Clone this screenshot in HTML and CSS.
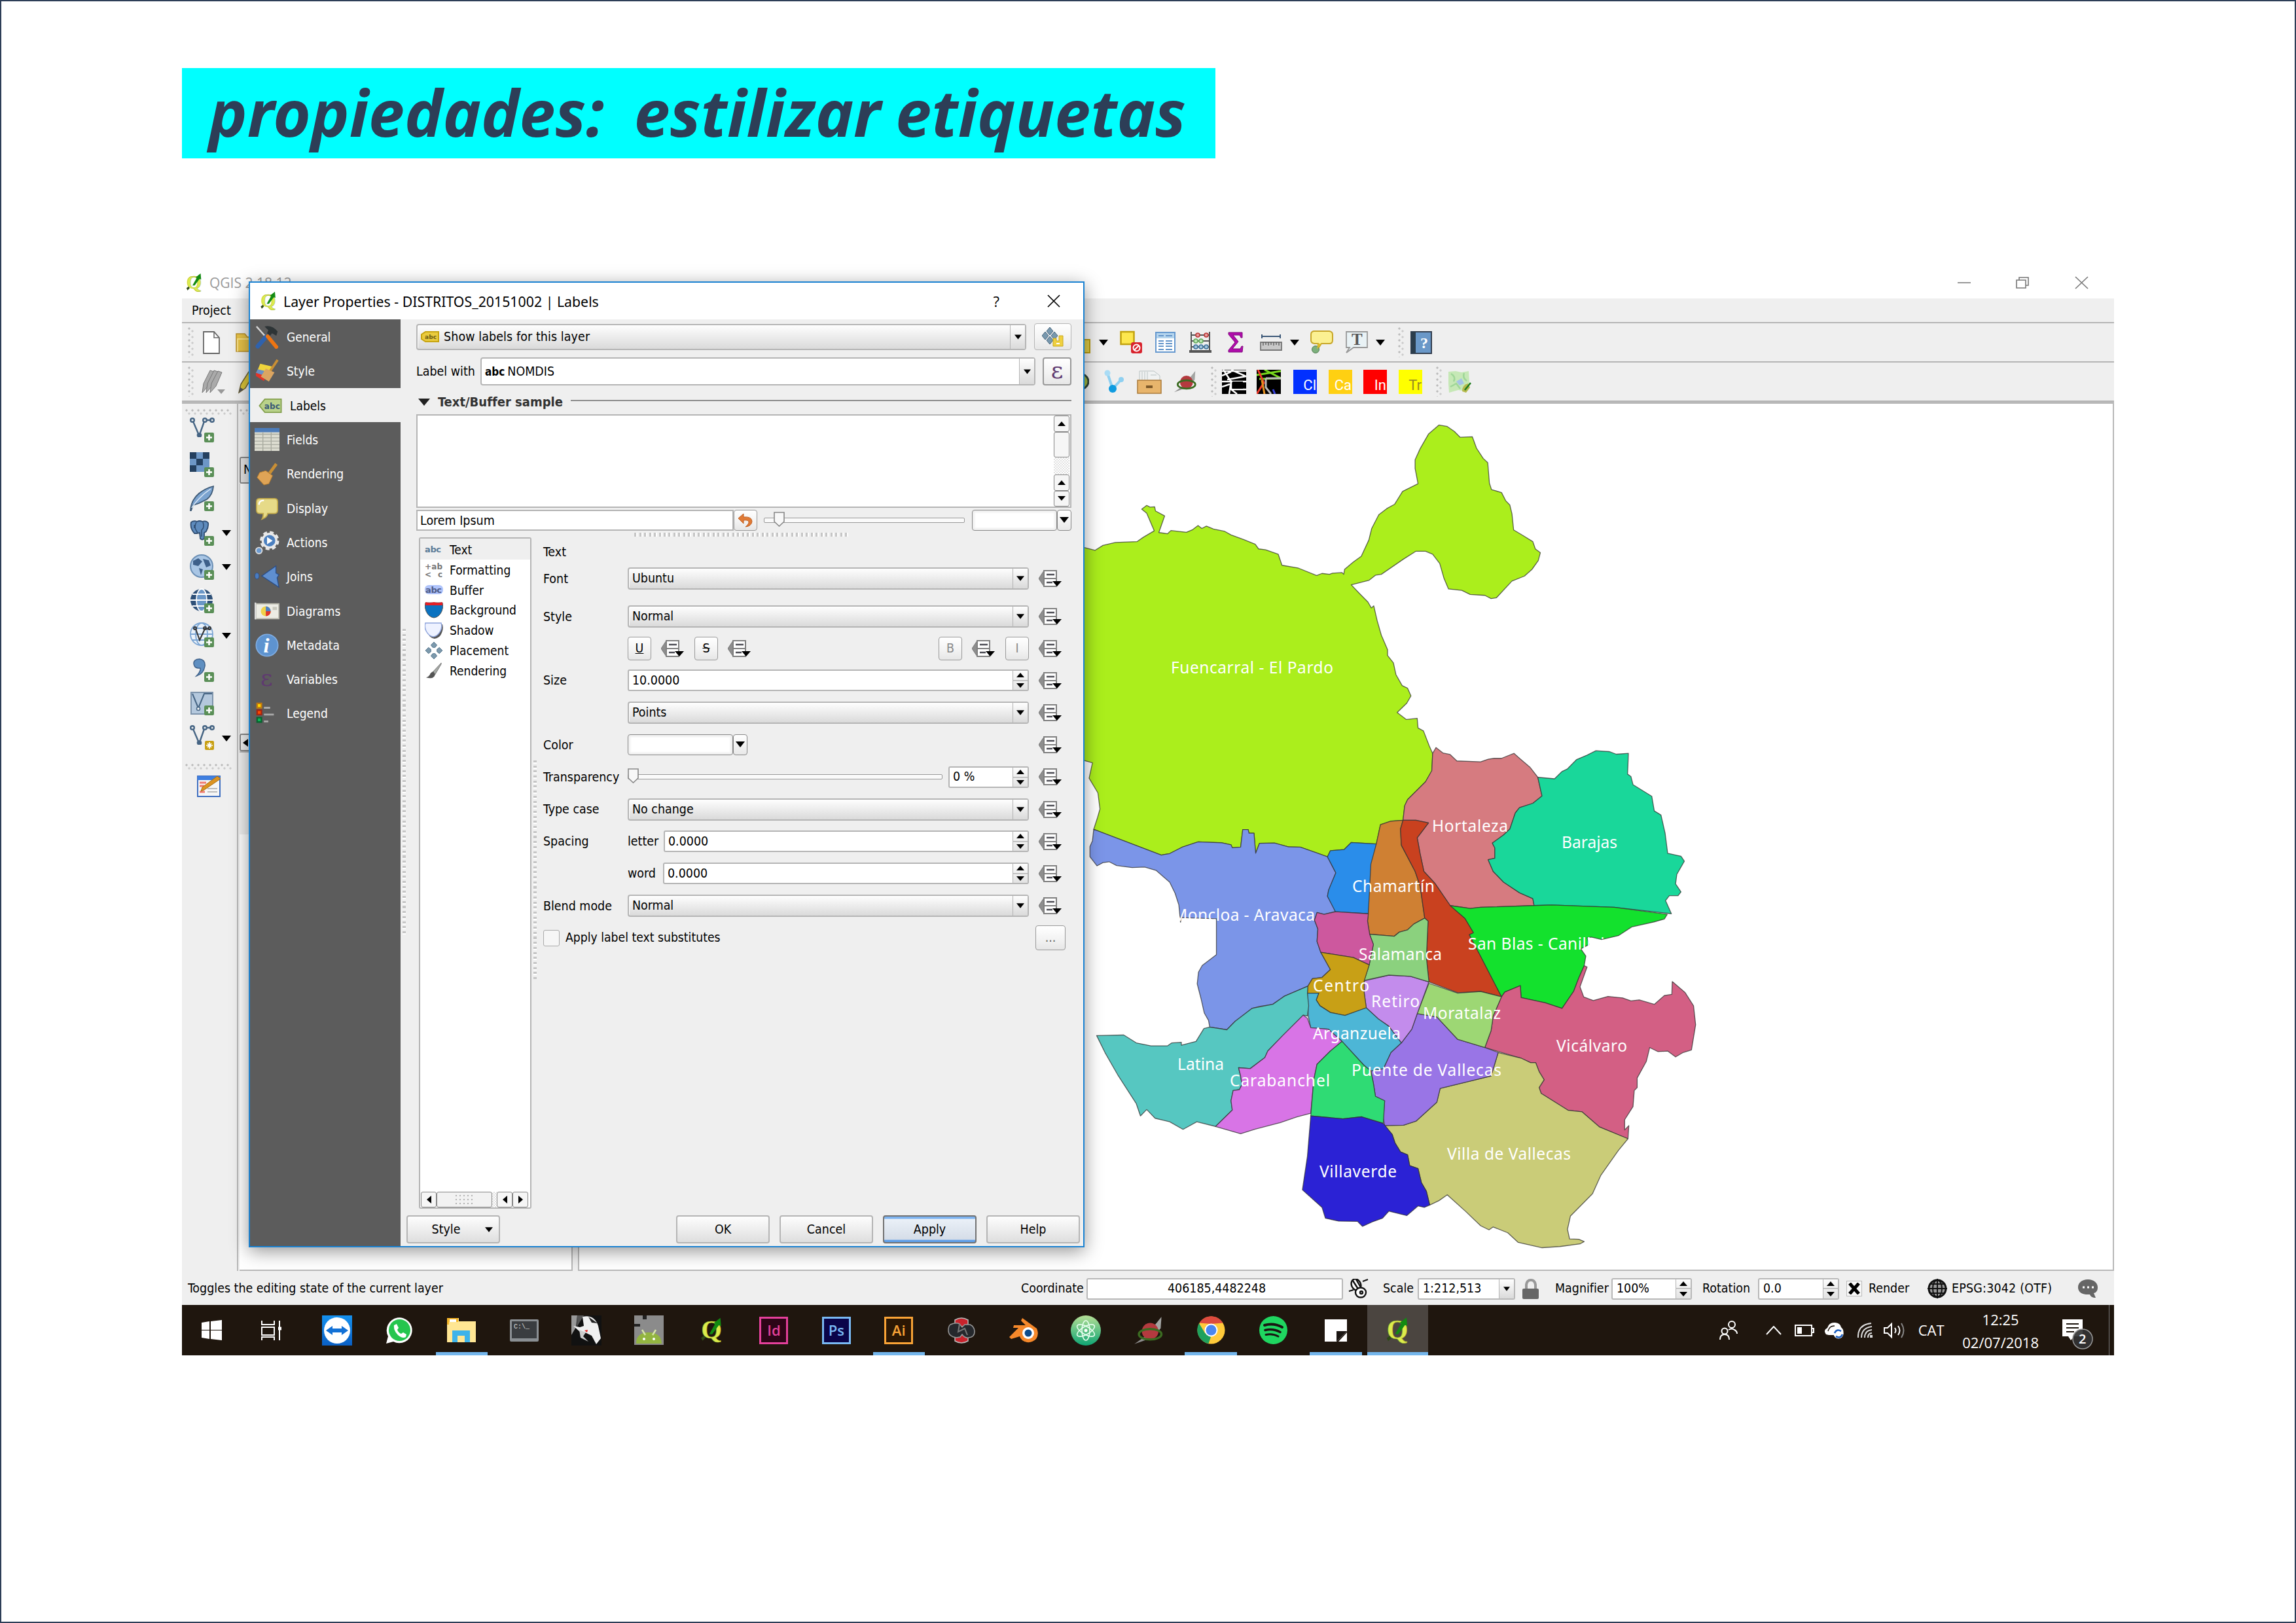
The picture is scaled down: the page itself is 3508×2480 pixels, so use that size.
FILE: index.html
```html
<!DOCTYPE html>
<html lang="es">
<head>
<meta charset="utf-8">
<title>propiedades: estilizar etiquetas</title>
<link rel="stylesheet" href="styles.css">
</head>
<body>
<svg class="defs" width="0" height="0">
  <defs>
    <linearGradient id="gAtom" x1="0" y1="0" x2="0" y2="1"><stop offset="0" stop-color="#b5df96"/><stop offset="1" stop-color="#0fa573"/></linearGradient>
    <linearGradient id="gTv" x1="0" y1="0" x2="0" y2="1"><stop offset="0" stop-color="#1591ee"/><stop offset="1" stop-color="#0a5fc4"/></linearGradient>
    <symbol id="qgis" viewBox="0 0 30 36"><text x="1" y="29" font-family="Liberation Serif" font-weight="bold" font-size="36" fill="#dcec4c" stroke="#9aa82a" stroke-width=".5">Q</text><path d="M12 23 20 9l-2-1 9-7 1 11-3-1-9 12z" fill="#128a12"/><path d="M1 28l4-3 2 3-4 4z" fill="#2e4a16"/></symbol>
    <symbol id="dd" viewBox="0 0 36 34"><path d="M8 5v24L0 17z" fill="#8e8e8e" stroke="#777"/><path d="M8 5h19v24H8z" fill="#fff" stroke="#808080" stroke-width="2"/><path d="M8 17h19" stroke="#808080" stroke-width="2"/><path d="M12 11h12M12 23h9" stroke="#4d4d55" stroke-width="2.600"/><path d="M21 21h14l-7 8z" fill="#000"/></symbol>
    <symbol id="tri" viewBox="0 0 14 9"><path d="M0 0h14L7 9z" fill="#000"/></symbol>
    <symbol id="plus" viewBox="0 0 16 16"><rect width="15" height="15" rx="2" fill="#5a8f57"/><path d="M7.500 3v9M3 7.500h9" stroke="#fff" stroke-width="2.600"/></symbol>
    <symbol id="vee" viewBox="0 0 38 30"><g fill="none" stroke="#466584" stroke-width="2.400"><path d="M5 6l9 21M15 26l7-20M25 4h8"/><circle cx="4" cy="4" r="2.800"/><circle cx="23" cy="4" r="2.800"/><circle cx="34" cy="4" r="2.800"/><circle cx="14.500" cy="27" r="2.600" fill="#466584"/></g></symbol>
    <symbol id="bird" viewBox="0 0 40 40"><path d="M24 18 37 2l-1 15-8 10z" fill="#a3a5a3"/><path d="M1 38l14-10 3 4z" fill="#8c8c8c"/><ellipse cx="22" cy="21" rx="11" ry="11" fill="#b43a3f"/><ellipse cx="22" cy="25" rx="15" ry="7" fill="none" stroke="#3b6b21" stroke-width="3"/></symbol>
  </defs>
</svg>
<main class="slide">
<h1 class="title"><span>propiedades:&nbsp; estilizar etiquetas</span></h1>

<section class="screen">
  <header class="win-title">
    <svg class="q-icon" width="25" height="30"><use href="#qgis"/></svg>
    <span>QGIS 2.18.12</span>
    <svg class="win-ctl" width="210" height="24" viewBox="0 0 210 24" fill="none" stroke="#777" stroke-width="1.600"><path d="M2 12h20M182 3l19 18M201 3l-19 18"/><path d="M92 8h14v12H92zM96 8V4h14v12h-4"/></svg>
  </header>
  <nav class="menubar"><span>Project</span></nav>

  <div class="toolbar tb-main">
    <i class="grip"></i>
    <svg width="26" height="35" viewBox="0 0 26 35"><path d="M1 1h16l8 9v24H1z" fill="#fff" stroke="#666" stroke-width="1.800"/><path d="M17 1v9h8" fill="none" stroke="#666" stroke-width="1.500"/></svg>
    <svg width="38" height="30" viewBox="0 0 38 30"><path d="M1 29V2h13l4 5h19v22z" fill="#e7c247" stroke="#b8902a" stroke-width="1.500"/><path d="M3 29V10h33" fill="none" stroke="#f7e08a" stroke-width="2"/></svg>
    <svg class="low" width="17" height="22" viewBox="0 0 17 22"><path d="M1 1h15v20H1z" fill="#dfcb45" stroke="#b89c10" stroke-width="2"/></svg>
    <svg width="14" height="9"><use href="#tri"/></svg>
    <svg width="35" height="36" viewBox="0 0 35 36"><path d="M1.500 2h20v19h-20z" fill="#fde74f" stroke="#c2a20c" stroke-width="2.500"/><rect x="17" y="18" width="17" height="17" rx="3" fill="#d8232d"/><circle cx="25.500" cy="26.500" r="5" fill="none" stroke="#fff" stroke-width="2"/><path d="M22 30l7-7" stroke="#fff" stroke-width="2"/></svg>
    <svg width="31" height="32" viewBox="0 0 31 32"><path d="M1 1h29v30H1z" fill="#fff" stroke="#6699cf" stroke-width="2"/><path d="M2 2h27v8H2z" fill="#b5d5ee"/><path d="M5 6h8M16 6h10M5 14h8M16 14h10M5 18h8M16 18h10M5 22h8M16 22h10M5 27h8M16 27h10" stroke="#6394c9" stroke-width="2"/></svg>
    <svg width="34" height="34" viewBox="0 0 34 34"><path d="M3 1v29M31 1v29M3 6h28M3 15h28M3 24h28" stroke="#555" stroke-width="2" fill="none"/><path d="M0 31h34" stroke="#555" stroke-width="4"/><g stroke-width="1.500"><g fill="#e69a9a" stroke="#b93434"><circle cx="13" cy="6" r="3"/><circle cx="26" cy="6" r="3"/></g><g fill="#b7e3b0" stroke="#62aa5c"><circle cx="10" cy="15" r="3"/><circle cx="18" cy="15" r="3"/></g><g fill="#9fc3dd" stroke="#3d7199"><circle cx="10" cy="24" r="3"/><circle cx="18" cy="24" r="3"/><circle cx="26" cy="24" r="3"/></g></g></svg>
    <svg width="24" height="32" viewBox="0 0 24 32"><path d="M1 1h21v8h-2l-2-4H8l8 10-9 11h12l2-4h2l-1 9H1v-3l10-12L1 4z" fill="#b00cab" stroke="#7f0a7c"/></svg>
    <svg width="34" height="26" viewBox="0 0 34 26"><path d="M3 4h28M3 1v6M31 1v6" stroke="#3c5878" stroke-width="2"/><path d="M1 13h32v12H1z" fill="#c8c8c8" stroke="#777" stroke-width="1.800"/><path d="M5 13v5M9 13v4M13 13v5M17 13v4M21 13v5M25 13v4M29 13v5" stroke="#666" stroke-width="1.500"/></svg>
    <svg width="14" height="9"><use href="#tri"/></svg>
    <svg width="35" height="36" viewBox="0 0 35 36"><path d="M5 1h24q5 1 5 5v9q0 5-5 5H17l-6 9 1-9H6q-5-1-5-5V6q0-4 4-5z" fill="#fbf092" stroke="#c8a72b" stroke-width="2"/><circle cx="8" cy="29" r="5.500" fill="#7cb07c" stroke="#567f56"/><path d="M17 20l-7 9 2-9z" fill="#dfbd25"/></svg>
    <svg width="34" height="36" viewBox="0 0 34 36"><path d="M1 2h32v24H12L1 34l5-8H1z" fill="#e9f2f5" stroke="#999" stroke-width="1.800"/><text x="9" y="22" font-family="Liberation Serif" font-weight="bold" font-size="25" fill="#555">T</text></svg>
    <svg width="14" height="9"><use href="#tri"/></svg>
    <i class="grip"></i>
    <svg width="33" height="35" viewBox="0 0 33 35"><path d="M1 1h31v33H1z" fill="#6a98c8" stroke="#333f50" stroke-width="2"/><path d="M1 1h7v33H1z" fill="#2b3d4c"/><text x="15" y="26" font-family="Liberation Serif" font-weight="bold" font-size="24" fill="#fff">?</text></svg>
  </div>

  <div class="toolbar tb-edit">
    <i class="grip"></i>
    <svg width="38" height="38" viewBox="0 0 38 38"><g fill="#aaa" stroke="#777"><path d="M2 36l2-14L14 2l6 2-9 22z"/><path d="M8 36l2-14L20 2l6 2-9 22z"/><path d="M14 36l2-14L26 3l6 2-9 21z"/></g><path d="M25 31h12l-6 7z" fill="#999"/></svg>
    <svg width="30" height="38" viewBox="0 0 30 38"><path d="M1 36l3-13L18 1l7 4-14 24z" fill="#dcc63a" stroke="#6d6230" stroke-width="1.500"/><path d="M1 36l2-8 5 3z" fill="#555"/></svg>
    <svg width="34" height="28" viewBox="0 0 34 28"><ellipse cx="17" cy="14" rx="16" ry="13" fill="#9fb73d" stroke="#2e4238" stroke-width="3"/></svg>
    <svg width="32" height="40" viewBox="0 0 32 40"><path d="M5 7l8 24M14 30L27 16" stroke="#8fd0f1" stroke-width="4"/><circle cx="5" cy="7" r="4.500" fill="#aadcf5"/><circle cx="26" cy="17" r="4" fill="#8fd0f1"/><circle cx="13" cy="31" r="6" fill="#0e9be0"/></svg>
    <svg width="38" height="37" viewBox="0 0 38 37"><path d="M4 2h22l9 7v8H4z" fill="#f0f2f2" stroke="#b9c2c2"/><path d="M8 3v12M12 3v12M16 3v12M21 8h9" stroke="#b9c2c2"/><path d="M1 16h36v20H1z" fill="#e8b56c" stroke="#aa7b3a" stroke-width="1.500"/><path d="M14 26h10" stroke="#7c5829" stroke-width="4"/></svg>
    <svg width="40" height="36"><use href="#bird"/></svg>
    <i class="grip"></i>
    <svg width="37" height="37" viewBox="0 0 37 37"><path d="M0 0h37v37H0z"/><g stroke="#fff" stroke-width="2.500" fill="none"><path d="M0 2h37M2 0l12 18L11 37M14 0l23 10L8 15M0 18h37M14 16v14l9 7M0 9l14-6M0 26l12-4M14 30h23"/></g><path d="M16 18h16v11H16z"/></svg>
    <svg width="37" height="37" viewBox="0 0 37 37"><path d="M0 0h37v37H0z"/><g stroke-width="3" fill="none"><path d="M0 8l37-6M12 0l25 13L4 14" stroke="#77d91d"/><path d="M2 0l9 20L0 37" stroke="#f03b2d"/><path d="M8 16l4 21" stroke="#e58f1e"/><path d="M14 13v14l8 10M14 13h23" stroke="#bbb"/><path d="M25 30l3 7" stroke="#3540dd"/></g></svg>
    <b class="plug cl">Cl</b><b class="plug ca">Ca</b><b class="plug in">In</b><b class="plug tr">Tr</b>
    <i class="grip"></i>
    <svg width="38" height="37" viewBox="0 0 38 37"><path d="M2 3l11-1 9 2 11-2 1 18-3 13-14-2-14 4-1-14z" fill="#c6e8b6"/><path d="M6 6q8 5 4 12M5 26l9-5 6 8M26 5q-3 7 4 12" stroke="#9fd698" stroke-width="2.500" fill="none"/><path d="M14 18l8-5 4 8-7 3z" fill="#a6c3e6"/><path d="M23 33q0-10 9-12l3 6-6 8z" fill="#b5b94c"/><path d="M27 31l9-11" stroke="#1d7b1d" stroke-width="2.500"/></svg>
  </div>

  <div class="workspace">
    <aside class="side-tools">
      <i class="grip-h"></i>
      <div class="tool"><svg width="38" height="40" viewBox="0 0 38 40"><use href="#vee" width="38" height="30"/><use href="#plus" x="22" y="23" width="16" height="16"/></svg></div>
      <div class="tool"><svg width="38" height="40" viewBox="0 0 38 40"><path d="M0 1h30v30H0z" fill="#6d97c6"/><path d="M0 1h10v10H0zM20 1h10v10H20zM10 11h10v10H10zM0 21h10v10H0z" fill="#24405f"/><use href="#plus" x="22" y="24" width="16" height="16"/></svg></div>
      <div class="tool"><svg width="38" height="40" viewBox="0 0 38 40"><path d="M1 38Q2 22 14 12 24 4 36 1q-1 13-10 20l-12 6-9 3-3 8z" fill="#7ba3cf" stroke="#3c5874" stroke-width="1.800"/><path d="M3 34Q14 17 32 5" stroke="#d8e6f4" stroke-width="1.500" fill="none"/><use href="#plus" x="22" y="24" width="16" height="16"/></svg></div>
      <div class="tool"><svg width="38" height="40" viewBox="0 0 38 40"><path d="M2 3q4-3 9-1 4-2 8 0 6-2 9 2 1 6-3 13l-3 2v9q-3 3-6 0l-1-9-4 1-4 0Q0 12 2 3z" fill="#5e8bbd" stroke="#2f4d72" stroke-width="1.800"/><path d="M10 3q-4 7 0 13l2 3M20 3q3 8-2 12v10M7 7v5" stroke="#2f4d72" stroke-width="1.500" fill="none"/><use href="#plus" x="22" y="24" width="16" height="16"/></svg><svg class="arr" width="14" height="9"><use href="#tri"/></svg></div>
      <div class="tool"><svg width="38" height="40" viewBox="0 0 38 40"><circle cx="18" cy="18" r="17" fill="#a9c6e5" stroke="#6b8fb5" stroke-width="2"/><path d="M5 10l8-4 6 5-6 7-8-2zM20 7l9 2 3 8-7 3zM14 21l6 2-3 9z" fill="#3e608a"/><use href="#plus" x="22" y="24" width="16" height="16"/></svg><svg class="arr" width="14" height="9"><use href="#tri"/></svg></div>
      <div class="tool"><svg width="38" height="40" viewBox="0 0 38 40"><circle cx="18" cy="18" r="17" fill="#2e5078"/><g fill="none" stroke="#fff" stroke-width="1.800"><ellipse cx="18" cy="18" rx="8" ry="17" fill="#6b97c7"/><path d="M1 18h34M4 9h28M4 27h28"/></g><use href="#plus" x="22" y="23" width="16" height="16"/></svg></div>
      <div class="tool"><svg width="38" height="40" viewBox="0 0 38 40"><g fill="#eaf2fa" stroke="#7ba5d3" stroke-width="1.800"><circle cx="18" cy="18" r="17"/><ellipse cx="18" cy="18" rx="9" ry="17"/><path d="M1 18h34M4 9h28M4 27h28"/></g><g fill="none" stroke="#333" stroke-width="2"><path d="M9 10l6 17 8-17h7"/><circle cx="8" cy="9" r="2"/><circle cx="23" cy="9" r="2"/><circle cx="30" cy="9" r="2"/></g><use href="#plus" x="22" y="23" width="16" height="16"/></svg><svg class="arr" width="14" height="9"><use href="#tri"/></svg></div>
      <div class="tool"><svg width="38" height="40" viewBox="0 0 38 40"><path d="M6 10q0-7 9-7 9 1 8 11-2 12-13 15 7-7 6-12-9 1-10-7z" fill="#5f8fc1" stroke="#3f618a" stroke-width="1.500"/><use href="#plus" x="22" y="23" width="16" height="16"/></svg></div>
      <div class="tool"><svg width="38" height="40" viewBox="0 0 38 40"><path d="M2 2h33v33H2z" fill="#b4c8dd" stroke="#7d93ab" stroke-width="2"/><path d="M4 4l9 22L22 4h12" fill="none" stroke="#466584" stroke-width="2"/><circle cx="13" cy="27" r="2.500" fill="#fff" stroke="#466584" stroke-width="1.500"/><use href="#plus" x="22" y="22" width="16" height="16"/></svg></div>
      <div class="tool"><svg width="38" height="40" viewBox="0 0 38 40"><use href="#vee" width="38" height="30"/><rect x="23" y="24" width="14" height="14" rx="2" fill="#c8a013"/><path d="M30 26v10M25 31h10M27 28l6 6M33 28l-6 6" stroke="#fff" stroke-width="1.700"/></svg><svg class="arr" width="14" height="9"><use href="#tri"/></svg></div>
      <i class="grip-h second"></i>
      <svg class="edit-form" width="37" height="34" viewBox="0 0 37 34"><path d="M1 2h34v31H1z" fill="#f6f6f6" stroke="#3f6fc0" stroke-width="2"/><path d="M1 2h34v6H1z" fill="#3f7fe0"/><path d="M4 12h10M4 17h7M4 26h8" stroke="#f07a70" stroke-width="3"/><path d="M16 21h15M16 26h15" stroke="#bbb" stroke-width="2"/><path d="M8 19L31 2l5 4-25 17-5 2z" fill="#dc9320" stroke="#a86d12"/></svg>
    </aside>
    <div class="panels">
      <i class="grip-h"></i>
      <div class="panel-tab">N</div>
      <div class="panel-body"></div>
      <div class="panel-scroll"><svg width="12" height="14"><path d="M11 1v12L3 7z"/></svg></div>
      <div class="panel-head"></div>
      <div class="panel-list"></div>
    </div>
    <div class="canvas">
      <svg class="map" viewBox="885 617 2343 1323">
        <g transform="translate(1650 620) scale(.63776 .44643)" class="districts">
          <path fill="#abee1c" d="M-20 480 12 486 36 495 55 478 85 468 137 465 152 450 178 428 160 368 148 354 160 341 168 347 179 346 181 360 203 377 189 434 210 438 218 427 255 433 270 424 283 410 292 420 303 412 320 422 347 430 362 442 392 458 420 474 428 490 445 493 475 508 484 546 522 555 567 581 580 574 598 577 605 573 628 571 632 577 634 560 655 535 674 515 692 460 699 420 716 373 735 352 754 337 773 293 810 267 803 215 803 185 815 147 835 97 860 66 880 71 897 88 911 108 940 106 950 145 966 180 977 195 981 265 986 287 1010 297 1020 325 1030 340 1035 370 1039 425 1060 443 1085 465 1091 490 1103 503 1098 530 1083 560 1065 583 1035 600 998 657 985 660 970 649 935 646 915 632 883 627 872 590 862 540 845 508 828 498 805 498 775 525 722 577 708 580 693 597 650 613 668 640 690 672 698 692 704 685 712 735 722 785 737 835 737 855 751 880 757 920 772 958 785 967 793 993 783 1018 760 1050 782 1074 808 1070 810 1103 823 1113 837 1165 845 1190 843 1250 828 1287 785 1348 778 1370 774 1419 745 1422 720 1434 710 1500 650 1495 633 1519 600 1523 593 1544 570 1532 528 1511 500 1510 466 1497 430 1498 421 1532 417 1463 405 1463 403 1451 390 1451 385 1511 365 1513 362 1503 340 1496 283 1493 245 1511 215 1533 195 1538 33 1450 42 1410 48 1380 43 1325 22 1275 30 1222 12 1215-20 1210Z"/>
        </g>
        <g transform="translate(1650 1240) scale(.63776 .44643)" class="districts">
          <path fill="#7b95e8" d="M33 61 195 149 215 144 245 122 283 104 340 107 362 114 365 124 385 122 390 62 403 62 405 74 417 74 421 143 430 109 466 108 500 121 528 122 570 143 593 155 613 210 596 268 593 290 613 342 585 352 568 346 562 372 570 402 568 445 577 482 600 541 580 568 557 572 546 598 490 632 462 660 430 667 412 674 384 705 372 718 352 747 311 738 308 715 298 690 290 640 281 590 284 550 293 527 327 490 327 367 243 363 241 379 237 320 228 280 215 242 183 202 155 190 125 192 88 185 70 172 55 175 41 186 24 155 24 120 30 100Z"/>
          <path fill="#2a8dea" d="M593 155 600 134 633 130 650 106 710 111 700 190 691 350 612 343 593 290 596 268 613 210Z"/>
          <path fill="#cf8033" d="M720 45 745 33 774 30 768 60 770 115 803 205 815 255 826 365 800 385 785 405 765 413 753 427 694 420 689 375 691 345 697 180 710 111Z"/>
          <path fill="#d67b80" d="M845-199 853-219 870-200 887-195 903-173 960-170 978-179 992-182 1010-182 1040-199 1055-180 1078-152 1097-117 1107-53 1085-28 1053-13 1043 5 1030 60 1015 80 988 108 994 125 994 160 978 165 990 205 1015 242 1053 278 1085 298 1088 322 960 328 935 332 887 322 850 245 824 205 815 145 808 90 835 39 805 30 774 30 778-20 785-41 828-102 843-140Z"/>
          <path fill="#c9411f" d="M774 30 805 30 835 39 808 90 815 145 824 205 850 245 887 322 922 365 943 415 933 422 958 490 1010 634 960 616 905 620 836 583 830 500 834 375 826 365 815 255 803 205 770 115 768 60Z"/>
          <path fill="#19d79a" d="M1097-117 1137-112 1155-137 1168-146 1190-178 1215-193 1236-208 1268-205 1285-196 1314-199 1312-128 1320-120 1325-92 1370-52 1376-2 1392 12 1402 75 1408 143 1440 153 1448 170 1430 215 1427 248 1440 275 1433 288 1412 288 1403 305 1417 350 1280 328 1130 320 1088 322 1085 298 1053 278 1015 242 990 205 978 165 994 160 994 125 988 108 1015 80 1030 60 1043 5 1053-13 1085-28 1107-53Z"/>
          <path fill="#13e12d" d="M887 322 935 332 960 328 1088 322 1130 320 1280 328 1407 352 1400 368 1375 378 1322 395 1290 425 1250 438 1225 430 1215 432 1220 455 1200 470 1212 495 1208 528 1195 570 1183 615 1155 674 1115 655 1057 637 1055 596 1018 618 1010 634 958 490 933 422 943 415 922 365Z"/>
          <path fill="#d35f84" d="M1010 634 1018 618 1055 596 1057 637 1115 655 1155 674 1183 615 1195 570 1208 528 1215 532 1198 600 1207 635 1230 647 1265 633 1300 638 1320 648 1340 645 1376 660 1400 630 1418 626 1419 582 1450 620 1470 665 1475 730 1465 816 1445 825 1427 840 1408 820 1385 822 1365 808 1357 855 1335 912 1335 945 1328 955 1325 1010 1305 1055 1305 1090 1315 1075 1313 1120 1245 1080 1203 1028 1170 1023 1105 965 1100 945 1112 918 1100 890 1092 860 1080 860 1058 845 970 808 985 750 990 700Z"/>
          <path fill="#cacc78" d="M1002 825 1058 845 1080 860 1092 860 1100 890 1112 918 1100 945 1105 965 1170 1023 1203 1028 1245 1080 1313 1120 1290 1160 1248 1245 1228 1308 1175 1385 1168 1430 1173 1463 1195 1464 1208 1472 1198 1480 1150 1489 1107 1493 1050 1475 1025 1442 990 1422 980 1432 960 1418 925 1370 880 1312 860 1332 838 1347 830 1300 818 1270 810 1222 790 1212 785 1175 768 1165 755 1135 748 1105 730 1075 775 1074 805 1060 855 995 863 948 985 905Z"/>
          <path fill="#9975e6" d="M808 692 855 703 905 780 970 808 1002 825 985 905 863 948 855 995 805 1060 775 1074 730 1075 727 1050 730 990 708 975 703 930 697 888 727 880 745 825 770 792 795 745Z"/>
          <path fill="#9dd774" d="M836 588 905 622 960 616 1010 634 990 700 985 750 970 808 905 780 855 703 808 692Z"/>
          <path fill="#c38cec" d="M681 580 740 560 792 564 836 583 808 692 795 745 770 792 740 735 715 710 686 672 681 620Z"/>
          <path fill="#8bd17e" d="M694 420 753 427 765 413 785 405 800 385 826 365 834 375 830 500 836 583 792 564 740 560 681 578 693 525 703 455Z"/>
          <path fill="#cd589e" d="M568 346 585 352 613 343 691 350 689 375 694 420 703 455 693 525 655 500 577 482 568 445 570 402 562 372Z"/>
          <path fill="#c8a016" d="M577 482 655 500 693 525 681 580 681 620 686 672 635 698 600 688 575 665 566 645 572 622 545 622 546 598 557 572 580 568 600 541Z"/>
          <path fill="#4db6d6" d="M545 622 572 622 566 645 575 665 600 688 635 698 686 672 715 710 740 735 770 792 745 825 727 880 697 888 680 868 628 787 595 745 553 740 547 700Z"/>
          <path fill="#56c7c1" d="M40 767 105 765 135 792 170 802 210 802 220 792 243 790 243 800 278 787 297 743 311 738 352 747 372 718 412 674 462 660 490 632 546 598 545 622 548 665 545 700 535 697 485 768 450 820 443 842 408 880 380 877 385 905 388 935 382 952 367 955 362 990 365 1022 325 1078 280 1062 247 1088 215 1062 180 1050 160 1020 145 1042 135 1000 90 900 60 825Z"/>
          <path fill="#d874e6" d="M535 697 545 708 553 740 595 745 628 787 600 820 568 865 560 920 553 1033 520 1045 480 1065 420 1087 385 1103 325 1078 365 1022 362 990 367 955 382 952 388 935 385 905 380 877 408 880 443 842 450 820 485 768Z"/>
          <path fill="#2fdb74" d="M628 787 680 868 697 888 703 930 708 975 730 990 727 1067 675 1045 630 1052 553 1042 560 920 568 865 600 820Z"/>
          <path fill="#2b22d5" d="M553 1042 630 1052 675 1045 727 1068 748 1105 755 1135 768 1165 785 1175 790 1212 810 1222 818 1270 830 1300 838 1347 825 1355 810 1350 783 1383 740 1368 725 1392 700 1405 677 1420 665 1403 620 1402 588 1392 580 1355 533 1295 545 1180Z"/>
        </g>
        <g class="map-labels">
          <text x="1789" y="1029" textLength="248">Fuencarral - El Pardo</text>
          <text x="2188" y="1270.500" textLength="116">Hortaleza</text>
          <text x="2386" y="1296" textLength="85">Barajas</text>
          <text x="2066" y="1363" textLength="126">Chamartín</text>
          <text x="1792" y="1407" textLength="217">Moncloa - Aravaca</text>
          <text x="2243" y="1451" textLength="235">San Blas - Canillejas</text>
          <text x="2076" y="1467" textLength="127">Salamanca</text>
          <text x="2006" y="1515" textLength="86">Centro</text>
          <text x="2095" y="1538.500" textLength="74">Retiro</text>
          <text x="2174" y="1556.500" textLength="119">Moratalaz</text>
          <text x="2006" y="1588" textLength="134">Arganzuela</text>
          <text x="1799" y="1634.500" textLength="71">Latina</text>
          <text x="1879" y="1659.500" textLength="153">Carabanchel</text>
          <text x="2065" y="1643.500" textLength="229">Puente de Vallecas</text>
          <text x="2378" y="1607" textLength="108">Vicálvaro</text>
          <text x="2016" y="1798.500" textLength="118">Villaverde</text>
          <text x="2211" y="1772" textLength="189">Villa de Vallecas</text>
        </g>
      </svg>
    </div>
  </div>

  <footer class="statusbar">
    <span>Toggles the editing state of the current layer</span>
    <span>Coordinate</span>
    <span class="field coord">406185,4482248</span>
    <svg width="31" height="30" viewBox="0 0 31 30"><g fill="#fff" stroke="#111" stroke-width="2.400"><ellipse cx="12" cy="9" rx="7" ry="9" transform="rotate(-25 12 9)"/><path d="M7 3l9 14M12 1l7 12"/><ellipse cx="19" cy="21" rx="8" ry="7.500"/><circle cx="20" cy="21" r="2"/></g><path d="M22 4l8-3M1 19l7-2" stroke="#111" stroke-width="2"/></svg>
    <span>Scale</span>
    <span class="field scale">1:212,513<i class="end"><svg width="10" height="7"><use href="#tri"/></svg></i></span>
    <svg width="26" height="31" viewBox="0 0 26 31"><path d="M6 16V9q1-7 7-7t7 7v7" fill="none" stroke="#999" stroke-width="4"/><rect y="15" width="25" height="16" rx="2" fill="#666"/></svg>
    <span>Magnifier</span>
    <span class="field mag">100%<i class="end updown"></i></span>
    <span>Rotation</span>
    <span class="field rot">0.0<i class="end updown"></i></span>
    <span class="check"><svg width="18" height="18" viewBox="0 0 18 18"><path d="M2 1l14 16M16 1L2 17" stroke="#000" stroke-width="5"/></svg></span>
    <span>Render</span>
    <svg width="30" height="30" viewBox="0 0 30 30"><circle cx="15" cy="15" r="13" fill="#999" stroke="#111" stroke-width="3"/><path d="M15 0v30M0 15h30M5 8h20M5 22h20" stroke="#111" stroke-width="2"/><ellipse cx="15" cy="15" rx="7" ry="13" fill="none" stroke="#111" stroke-width="2"/></svg>
    <span class="crs">EPSG:3042 (OTF)</span>
    <svg width="32" height="29" viewBox="0 0 32 29"><path d="M16 0c9 0 15 5 15 12 0 5-2 8-6 9l3 7c-5 0-8-2-9-5h-6C5 22 1 18 1 12 1 5 7 0 16 0z" fill="#666"/><path d="M8 12h3M15 12h3M22 12h3" stroke="#fff" stroke-width="3"/></svg>
  </footer>

  <div class="taskbar">
    <span class="sys"><svg width="31" height="31" viewBox="0 0 31 31" fill="#fff"><path d="M0 4l12-2v13H0zM14 2l17-2v15H14zM0 16h12v13L0 27zM14 16h17v15l-17-2z"/></svg></span>
    <span class="sys"><svg width="32" height="30" viewBox="0 0 32 30" fill="none" stroke="#fff" stroke-width="2"><path d="M1 0v6h19V0M1 10h19v12H1zM1 30v-5h19v5M28 0v30"/><path d="M26 12h5" stroke-width="5"/></svg></span>
    <div class="apps">
      <span class="app"><svg width="46" height="46" viewBox="0 0 46 46"><path d="M0 0h46v46H0z" fill="url(#gTv)"/><circle cx="23" cy="23" r="20" fill="#fff"/><path d="M6 23l10-7v4h14v-4l10 7-10 7v-4H16v4z" fill="#1271d6"/></svg></span>
      <span class="app"><svg width="42" height="42" viewBox="0 0 42 42"><path d="M1 41l3-11a19.500 19.500 0 1 1 8 8z" fill="#fff"/><circle cx="21.500" cy="20.500" r="16.500" fill="#25c54e"/><path d="M13 13l4-2 3 6-2 3q2 5 6 6l3-2 5 3-1 4q-5 3-12-3-7-7-6-15z" fill="#fff"/></svg></span>
      <span class="app on"><svg width="44" height="38" viewBox="0 0 44 38"><path d="M0 0h18v5h26v32H0z" fill="#ffe693"/><path d="M0 0h17v6H3v4H0z" fill="#f5b62a"/><path d="M4 2h10v4H4z" fill="#fff"/><path d="M8 37V19h27v18h-8V27H16v10z" fill="#3db3ea"/></svg></span>
      <span class="app"><svg width="44" height="34" viewBox="0 0 44 34"><rect width="44" height="34" rx="2" fill="#8a8f93"/><path d="M3 3h38v26H3z" fill="#3a3d40"/><text x="6" y="14" font-family="Liberation Mono" font-size="10" fill="#ddd">C:\_</text></svg></span>
      <span class="app"><svg width="46" height="46" viewBox="0 0 46 46"><path d="M0 0h46v46H0z" fill="#111"/><path d="M0 0h9l-2 18L0 30z" fill="#999"/><path d="M9 0h10L8 18z" fill="#555"/><path d="M17 2q18-4 24 14l4 19-7 9-7-13-10-5-8-1-10-9 10 2 6-2z" fill="#f0f0f0"/><path d="M26 2l14 10-9-1z" fill="#222"/><path d="M12 22l10 4-4 6 8 8-12-6z" fill="#ccc"/><path d="M20 23l5-1-1 4z" fill="#d22"/></svg></span>
      <span class="app"><svg width="45" height="45" viewBox="0 0 45 45"><path d="M0 0h45v45H0z" fill="#8b8b8b"/><path d="M3 43q0-17 19-17t20 17z" fill="#93b541"/><path d="M12 22l5 8M33 22l-5 8" stroke="#d7e6a8" stroke-width="2.500"/><circle cx="15" cy="36" r="2" fill="#fff"/><circle cx="30" cy="36" r="2" fill="#fff"/><path d="M0 13h9v4H0zM13 0h6v6h-6z" fill="#222"/></svg></span>
      <span class="app"><svg width="34" height="42"><use href="#qgis"/></svg></span>
      <span class="app"><b class="adobe id">Id</b></span>
      <span class="app"><b class="adobe ps">Ps</b></span>
      <span class="app on"><b class="adobe ai">Ai</b></span>
      <span class="app"><svg width="42" height="42" viewBox="0 0 42 42"><path d="M11 5q10-6 20 0v10H11zM11 26h20v11q-10 6-20 0z" fill="#c9232c" stroke="#bbb" stroke-width="1.500"/><path d="M4 12q9-4 14-1l4 5 4-4h8q7 3 7 11 0 8-9 9-6 1-10-5l-3 4-6 1Q1 30 1 21 1 14 4 12z" fill="#25282c" stroke="#999" stroke-width="1.500"/><path d="M18 11l-2 12 10-5 4 10" stroke="#777" stroke-width="2" fill="none"/></svg></span>
      <span class="app"><svg width="44" height="38" viewBox="0 0 44 38"><path d="M20 0l22 16q4 9-1 16-6 6-14 5-9-2-11-9L3 32l-3-3 14-14H6l1-4h18l-7-7z" fill="#f5882a"/><circle cx="29" cy="23" r="9" fill="#fff"/><circle cx="29" cy="23" r="5.500" fill="#0d4c8c"/></svg></span>
      <span class="app"><svg width="46" height="46" viewBox="0 0 46 46"><circle cx="23" cy="23" r="23" fill="url(#gAtom)"/><g fill="none" stroke="#e8fff0" stroke-width="1.600"><ellipse cx="23" cy="23" rx="6" ry="15"/><ellipse cx="23" cy="23" rx="6" ry="15" transform="rotate(60 23 23)"/><ellipse cx="23" cy="23" rx="6" ry="15" transform="rotate(120 23 23)"/></g><circle cx="23" cy="23" r="2.500" fill="#fff"/></svg></span>
      <span class="app"><svg width="46" height="46"><use href="#bird"/></svg></span>
      <span class="app on"><svg width="43" height="43" viewBox="0 0 43 43"><circle cx="21.500" cy="21.500" r="21" fill="#ffca3a"/><path d="M3.500 10.500a21 21 0 0 1 36 0L21.500 12z" fill="#dd4b3e"/><path d="M3 11l9 15 9 6-3.500 10A21 21 0 0 1 3 11z" fill="#1fa15d"/><circle cx="21.500" cy="21.500" r="10" fill="#fff"/><circle cx="21.500" cy="21.500" r="8" fill="#4a86ee"/></svg></span>
      <span class="app"><svg width="43" height="43" viewBox="0 0 43 43"><circle cx="21.500" cy="21.500" r="21.500" fill="#1fd660"/><g fill="none" stroke="#1a1512" stroke-linecap="round"><path d="M8 14q14-4 27 3" stroke-width="4"/><path d="M9 21.500q12-3 23 3" stroke-width="3.500"/><path d="M10 28.500q10-2.500 19 2.500" stroke-width="3"/></g></svg></span>
      <span class="app on"><svg width="34" height="36" viewBox="0 0 34 36"><path d="M0 1h34v18L18 35H0z" fill="#fff"/><path d="M18 19h16L18 35z" fill="#1a1512"/><path d="M34 21v14H21z" fill="#fff"/></svg></span>
      <span class="app on active"><svg width="36" height="42"><use href="#qgis"/></svg></span>
    </div>
    <div class="tray">
      <svg width="30" height="30" viewBox="0 0 30 30" fill="none" stroke="#fff" stroke-width="2"><circle cx="20" cy="6" r="5"/><circle cx="9" cy="16" r="4.500"/><path d="M2 29q0-8 7-8t7 8M15 14q5-3 9 0 4 2 4 6"/></svg>
      <svg width="24" height="14" viewBox="0 0 24 14" fill="none" stroke="#fff" stroke-width="2"><path d="M1 13L12 1l11 12"/></svg>
      <svg width="30" height="18" viewBox="0 0 30 18"><path d="M1 1h25v16H1zM26 6h3v6h-3" fill="none" stroke="#fff" stroke-width="2"/><path d="M4 4h7v10H4z" fill="#fff"/></svg>
      <svg width="32" height="26" viewBox="0 0 32 26"><path d="M3 19q-5-6 2-10Q8 0 17 1q8 1 9 7 5 4 3 12H7z" fill="#fff"/><path d="M6 14q2-8 10-8" stroke="#1f160e" stroke-width="1.500" fill="none"/><circle cx="22" cy="18" r="7.500" fill="#fff"/><path d="M16 17q3-7 10-3M28 19q-3 7-10 3" stroke="#1d5fc0" stroke-width="2.600" fill="none"/></svg>
      <svg width="24" height="24" viewBox="0 0 24 24" fill="none" stroke="#ddd" stroke-width="2"><path d="M1 23Q0 3 21 1M6 23Q6 8 22 6M11 23q0-11 11-12M16 23q0-7 6-7"/><path d="M19 21h4" stroke-width="4"/></svg>
      <svg width="33" height="26" viewBox="0 0 33 26" fill="none" stroke="#fff" stroke-width="2"><path d="M1 9h5l6-6v20l-6-6H1zM17 9q3 4 0 8M22 6q5 7 0 14"/><path d="M27 2q7 11 0 22" stroke="#888"/></svg>
      <span class="lang">CAT</span>
      <span class="clock">12:25<br>02/07/2018</span>
      <svg width="48" height="48" viewBox="0 0 48 48"><path d="M0 1h31v26H18l-5 6-4-6H0z" fill="#fff"/><path d="M6 8h19M6 14h19M6 20h12" stroke="#1c150e" stroke-width="2"/><circle cx="31" cy="31" r="15" fill="#333" fill-opacity=".92" stroke="#999" stroke-width="1.500"/><text x="25" y="38" font-family="Open Sans" font-weight="600" font-size="20" fill="#fff">2</text></svg>
    </div>
  </div>

  <div class="dialog">
    <div class="dlg-title">
      <svg width="26" height="30"><use href="#qgis"/></svg>
      <span class="name">Layer Properties - DISTRITOS_20151002 | Labels</span>
      <span class="help">?</span>
      <svg width="20" height="20" viewBox="0 0 20 20" stroke="#000" stroke-width="1.700"><path d="M1 1l18 18M19 1L1 19"/></svg>
    </div>
    <div class="dlg-main">
      <ul class="tabs">
        <li><svg viewBox="0 0 38 38"><path d="M2 2l17 19" stroke="#d5d5d5" stroke-width="2.500"/><path d="M15 2q12-3 21 8l-2 7-7-4-3 4-5-4 2-5z" fill="#2d3436"/><path d="M4 34L17 19" stroke="#2f62ad" stroke-width="7" stroke-linecap="round"/><path d="M20 18l14 17" stroke="#ee7512" stroke-width="6" stroke-linecap="round"/></svg>General</li>
        <li><svg viewBox="0 0 38 38"><path d="M8 7l20 5-4 9L4 17z" fill="#f0d43c"/><path d="M4 16l16 4-4 8L1 22z" fill="#6b90c4"/><path d="M1 22l16 5-3 8L1 27z" fill="#e33327"/><path d="M36 1L24 19" stroke="#c98f35" stroke-width="4"/><path d="M17 15l14 6-9 15-13-8z" fill="#dba561"/></svg>Style</li>
        <li class="sel"><svg viewBox="0 0 38 26"><path d="M10 2h27v22H10L1 13z" fill="#b9d28a" stroke="#84a04e" stroke-width="2"/><text x="9" y="18" font-family="DejaVu Sans" font-weight="bold" font-size="13" textLength="26" fill="#385a76">abc</text></svg>Labels</li>
        <li><svg viewBox="0 0 36 34"><path d="M0 1h36v32H0z" fill="#dcdcd0"/><path d="M0 0h36v6H0z" fill="#4c7cba"/><path d="M0 9h36M0 14h36M0 19h36M0 24h36M0 29h36M12 6v27M24 6v27" stroke="#a9aba0" stroke-width="1.300"/></svg>Fields</li>
        <li><svg viewBox="0 0 38 38"><path d="M34 3L23 18" stroke="#c98f35" stroke-width="5"/><path d="M7 17l10-3 11 8-6 13-8 2L3 25z" fill="#dfa456" stroke="#b37a2a"/></svg>Rendering</li>
        <li><svg viewBox="0 0 38 38"><path d="M7 3h24q5 0 5 5v14q0 5-5 5H20q0 6-9 9 2-3 2-9H7q-5 0-5-5V8q0-5 5-5z" fill="#e6da88" stroke="#c2a94a" stroke-width="1.800"/><path d="M6 13q0-7 8-7" stroke="#fff" stroke-width="2.500" fill="none"/></svg>Display</li>
        <li><svg viewBox="0 0 38 38"><circle cx="23" cy="16" r="13" fill="none" stroke="#e8e8e8" stroke-width="5" stroke-dasharray="6 4.200"/><circle cx="23" cy="16" r="11" fill="#4c80c0" stroke="#e8e8e8" stroke-width="3.500"/><path d="M19 10v12l9-6z" fill="#fff"/><circle cx="6" cy="32" r="5" fill="#6d9bd0" stroke="#ddd" stroke-width="2"/></svg>Actions</li>
        <li><svg viewBox="0 0 42 38"><ellipse cx="4" cy="18" rx="3.500" ry="5" fill="#4a7cc0" stroke="#2c4f88"/><path d="M12 18L36 1v12l5 3-3 5 3 16z" fill="#5f8fd0" stroke="#2c4f88" stroke-width="1.500"/></svg>Joins</li>
        <li><svg viewBox="0 0 40 28"><path d="M2 2h37v24H2z" fill="#ecece4" stroke="#b9b9ad" stroke-width="2"/><path d="M1 0v27" stroke="#ddd" stroke-width="3"/><circle cx="18" cy="14" r="8" fill="#f0d24a"/><path d="M18 6a8 8 0 0 1 8 8h-8z" fill="#4d80c4"/><path d="M26 14a8 8 0 0 1-8 8v-8z" fill="#e0362c"/><path d="M29 7h7v5h-7z" fill="#c8c8bd"/></svg>Diagrams</li>
        <li><svg viewBox="0 0 40 40"><circle cx="20" cy="20" r="18.500" fill="#5e93cf" stroke="#7eabe0" stroke-width="2"/><text x="14" y="32" font-family="Liberation Serif" font-style="italic" font-weight="bold" font-size="36" fill="#fff">i</text></svg>Metadata</li>
        <li><svg viewBox="0 0 40 40"><text x="9" y="31" font-family="DejaVu Serif" font-size="40" fill="#5f3a70">ε</text></svg>Variables</li>
        <li><svg viewBox="0 0 38 38"><g stroke-width="2.500"><path d="M3 3h7v7H3z" fill="#ffd800" stroke="#c47a0c"/><path d="M3 14h7v7H3z" fill="#ff4a00" stroke="#a52510"/><path d="M3 26h7v7H3z" fill="#0db455" stroke="#08642f"/></g><path d="M14 10h10M14 21h16M14 32h7" stroke="#aaa" stroke-width="3"/></svg>Legend</li>
      </ul>
      <div class="content">
        <div class="row r1">
          <div class="combo wide"><svg class="tag" width="28" height="17" viewBox="0 0 28 17"><path d="M7 1h20v15H7L1 12V5z" fill="#eacb3e" stroke="#c7a410" stroke-width="2"/><text x="6" y="12" font-family="DejaVu Sans" font-weight="bold" font-size="9" textLength="18" fill="#6b5b12">abc</text></svg><span>Show labels for this layer</span><i class="end"><svg width="11" height="8"><use href="#tri"/></svg></i></div>
          <button class="btn sq"><svg width="34" height="30" viewBox="0 0 34 30"><g fill="#7898ae" stroke="#46657c"><path d="M12 0l5 6-5 6-5-6zM12 14l5 6-5 6-5-6zM0 13l5-6 5 6-5 6zM24 13l-5-6-5 6 5 6z"/></g><path d="M17 29V17h5v4h4v-8h6v16z" fill="#efd040" stroke="#c9a81c"/><path d="M22 25h5" stroke="#fff" stroke-width="2"/></svg></button>
        </div>
        <div class="row r2">
          <span class="lbl-with">Label with</span>
          <div class="combo white field-combo"><b class="abc">abc</b><span>NOMDIS</span><i class="end"><svg width="11" height="8"><use href="#tri"/></svg></i></div>
          <button class="btn eps">ε</button>
        </div>
        <div class="row group"><svg width="18" height="11"><path d="M0 0h18l-9 11z" fill="#222"/></svg><b>Text/Buffer sample</b><hr></div>
        <div class="sample">
          <div class="vscroll"><i class="sb u"></i><i class="thumb"></i><i class="trough"></i><i class="sb u"></i><i class="sb d"></i></div>
        </div>
        <div class="row r5">
          <div class="input">Lorem Ipsum</div>
          <button class="btn undo"><svg width="24" height="22" viewBox="0 0 24 22"><path d="M9 1L1 8l8 8v-5q9-1 8 4-1 3-5 6 9-1 10-8Q22 5 9 6z" fill="#e07a35" stroke="#c05f22"/></svg></button>
          <div class="slider s1"><svg class="handle" width="17" height="23" viewBox="0 0 17 23"><path d="M1 1h15v14l-7.500 7L1 15z" fill="#f8f8f8" stroke="#888" stroke-width="1.600"/></svg></div>
          <div class="color c1"><i></i><b><svg width="14" height="9"><use href="#tri"/></svg></b></div>
        </div>
        <i class="dots-h"></i>
        <div class="split">
          <div class="list">
            <ul>
              <li class="sel"><svg viewBox="0 0 28 24"><text x="0" y="16" font-family="DejaVu Sans" font-weight="bold" font-size="13" textLength="25" fill="#5c7c98">abc</text></svg>Text</li>
              <li><svg viewBox="0 0 28 24"><text x="0" y="11" font-family="DejaVu Sans" font-weight="bold" font-size="12" textLength="27" fill="#777">+ab</text><text x="0" y="23" font-family="DejaVu Sans" font-weight="bold" font-size="12" textLength="27" fill="#777">&lt; c</text></svg>Formatting</li>
              <li><svg viewBox="0 0 28 24"><rect x="0" y="4" width="28" height="14" rx="6" fill="#b0c4fb"/><text x="1" y="16" font-family="DejaVu Sans" font-weight="bold" font-size="13" textLength="25" fill="#4c5a86">abc</text></svg>Buffer</li>
              <li><svg viewBox="0 0 28 26"><path d="M1 2h26q2 6-1 13-4 9-12 10-8-1-12-10-3-7-1-13z" fill="#0a72c0" stroke="#555"/><path d="M1 1q7 2 13 0 6 2 13 0v5H1z" fill="#e21f26"/></svg>Background</li>
              <li><svg viewBox="0 0 28 26"><path d="M4 4h23q2 6-1 13-3 8-11 9-8-1-10-9z" fill="#555"/><path d="M1 2h24q2 6-1 12-4 8-11 9-7-1-11-9-3-6-1-12z" fill="#eef2ff" stroke="#8fa5dd" stroke-width="1.500"/></svg>Shadow</li>
              <li><svg viewBox="0 0 28 28" fill="#7c99ac" stroke="#55758c"><path d="M14 0l5 5-3 4h-4L9 5zM14 28l5-5-3-4h-4l-3 4zM0 14l5-5 4 3v4l-4 3zM28 14l-5-5-4 3v4l4 3z"/></svg>Placement</li>
              <li><svg viewBox="0 0 28 28"><path d="M26 1L12 16l4 4L26 3z" fill="#a5a9a5" stroke="#777"/><path d="M13 15q-5 2-6 6-2 3-6 4 13 4 15-5z" fill="#555"/></svg>Rendering</li>
            </ul>
            <div class="hscroll"><i class="sb l"></i><i class="thumb"></i><i class="trough"></i><i class="sb l"></i><i class="sb r"></i></div>
          </div>
          <div class="form">
            <div class="frow head"><label>Text</label></div>
            <div class="frow font"><label>Font</label><div class="combo"><span>Ubuntu</span><i class="end"><svg width="12" height="8"><use href="#tri"/></svg></i></div><svg class="dd"><use href="#dd"/></svg></div>
            <div class="frow style"><label>Style</label><div class="combo"><span>Normal</span><i class="end"><svg width="12" height="8"><use href="#tri"/></svg></i></div><svg class="dd"><use href="#dd"/></svg></div>
            <div class="frow"><label></label><div class="biu"><button class="btn"><u>U</u></button><svg class="dd"><use href="#dd"/></svg><button class="btn"><s>S</s></button><svg class="dd"><use href="#dd"/></svg><em></em><button class="btn off">B</button><svg class="dd"><use href="#dd"/></svg><button class="btn off">I</button></div><svg class="dd"><use href="#dd"/></svg></div>
            <div class="frow"><label>Size</label><div class="spin">10.0000<i class="end updown"></i></div><svg class="dd"><use href="#dd"/></svg></div>
            <div class="frow"><label></label><div class="combo"><span>Points</span><i class="end"><svg width="12" height="8"><use href="#tri"/></svg></i></div><svg class="dd"><use href="#dd"/></svg></div>
            <div class="frow"><label>Color</label><div class="cell"><div class="color c2"><i></i><b><svg width="14" height="9"><use href="#tri"/></svg></b></div></div><svg class="dd"><use href="#dd"/></svg></div>
            <div class="frow"><label>Transparency</label><div class="cell"><div class="slider s2"><svg class="handle" width="17" height="23" viewBox="0 0 17 23"><path d="M1 1h15v14l-7.500 7L1 15z" fill="#f8f8f8" stroke="#888" stroke-width="1.600"/></svg></div><div class="spin pct">0 %<i class="end updown"></i></div></div><svg class="dd"><use href="#dd"/></svg></div>
            <div class="frow"><label>Type case</label><div class="combo"><span>No change</span><i class="end"><svg width="12" height="8"><use href="#tri"/></svg></i></div><svg class="dd"><use href="#dd"/></svg></div>
            <div class="frow"><label>Spacing</label><div class="cell"><span class="sub">letter</span><div class="spin">0.0000<i class="end updown"></i></div></div><svg class="dd"><use href="#dd"/></svg></div>
            <div class="frow"><label></label><div class="cell"><span class="sub word">word</span><div class="spin">0.0000<i class="end updown"></i></div></div><svg class="dd"><use href="#dd"/></svg></div>
            <div class="frow"><label>Blend mode</label><div class="combo"><span>Normal</span><i class="end"><svg width="12" height="8"><use href="#tri"/></svg></i></div><svg class="dd"><use href="#dd"/></svg></div>
            <div class="frow subst"><i class="box"></i><span>Apply label text substitutes</span><button class="btn more">...</button></div>
          </div>
        </div>
        <div class="buttons">
          <button class="btn push menu"><span>Style</span><svg width="12" height="8"><use href="#tri"/></svg></button>
          <button class="btn push ok">OK</button>
          <button class="btn push">Cancel</button>
          <button class="btn push default">Apply</button>
          <button class="btn push">Help</button>
        </div>
        <i class="dots-v a"></i>
        <i class="dots-v b"></i>
      </div>
    </div>
  </div>
</section>
</main>
</body>
</html>
```
FILE: styles.css
```css
* { box-sizing: border-box; }
body { margin: 0; background: #fff; }
.defs { position: absolute; }
svg { display: block; flex: none; }
ul { list-style: none; margin: 0; padding: 0; }
i, em { font-style: normal; }

.slide {
  width: 3508px; height: 2480px; overflow: hidden;
  border: 2px solid #2d3e57;
  padding: 102px 0 0 276px;
  font: 19.450px/24px "DejaVu Sans Condensed", "DejaVu Sans", sans-serif;
  color: #000;
}
.title {
  margin: 0 0 168px; width: 1579px; height: 138px; padding-left: 41px;
  background: #0ff; color: #2d3e57;
  font: italic bold 98.600px/134px "Noto Sans", "Open Sans", sans-serif;
  word-spacing: -3px;
  white-space: nowrap;
}

/* application window */
.screen { position: relative; width: 2952px; height: 1661px; display: flex; flex-direction: column; }
.win-title { height: 46px; display: flex; align-items: center; padding: 0 0 2px 6px; font-family: "Open Sans", sans-serif; color: #999; }
.win-title span { margin-left: 11px; font-size: 21px; }
.win-ctl { margin: 0 31px 0 auto; }
.menubar { height: 38px; background: #efefef; border-bottom: 2px solid #b5b5b5; padding: 2px 0 0 15px; display: flex; align-items: center; }
.toolbar { height: 60px; background: #efefef; border-bottom: 2px solid #b5b5b5; padding-left: 9px; display: grid; align-items: center; }
.tb-main { grid-template-columns: 23px 50px 1289px 30px 32px 54px 52px 59px 49px 46px 31px 54px 46px 34px 19px 40px; }
.tb-edit { grid-template-columns: 20px 57px 1266px 57px 50px 54px 59px 17px 53px 56px 54px 53px 54px 57px 17px 40px; }
.low { margin-top: 12px; }
.grip {
  width: 9px; height: 46px;
  background:
    radial-gradient(circle at 2px 2px, #bbb 1.4px, transparent 1.8px) 0 0 / 9px 9px,
    radial-gradient(circle at 7px 6px, #ccc 1.4px, transparent 1.8px) 0 0 / 9px 9px;
}
.grip-h {
  display: block; width: 72px; height: 9px;
  background:
    radial-gradient(circle at 2px 2px, #bbb 1.4px, transparent 1.8px) 0 0 / 9px 9px,
    radial-gradient(circle at 6px 7px, #ccc 1.4px, transparent 1.8px) 0 0 / 9px 9px;
}
.plug { width: 36px; height: 37px; color: #fff; font: 22px/26px Roboto, sans-serif; padding: 11px 1px 0 0; text-align: right; }
.cl { background: #0230ff; } .ca { background: #ffd012; } .in { background: #f00; } .tr { background: #ff0; color: #998d22; }

.workspace { flex: 1; display: flex; background: #efefef; border-top: 3px solid #b8b8b8; min-height: 0; }
.side-tools { width: 86px; padding: 8px 0 0 5px; border-right: 2px solid #b8b8b8; }
.tool { height: 52.3px; display: flex; align-items: center; padding: 1px 0 0 7px; }
.tool .arr { margin-left: 11px; }
.side-tools .grip-h:first-child { margin-bottom: -3px; }
.side-tools .second { margin-top: 13px; }
.edit-form { margin: 8px 0 0 18px; }
.panels { width: 511px; padding-left: 2px; display: flex; flex-direction: column; border-right: 2px solid #b8b8b8; background: #efefef; }
.panels .grip-h { margin: 8px 0 64px; }
.panel-tab { height: 41px; border: 2px solid #888; border-radius: 3px; padding: 6px 4px; background: #e6e6e6; }
.panel-body { height: 382px; background: #fff; border-left: 1px solid #bbb; }
.panel-scroll { height: 27px; border: 2px solid #888; border-radius: 3px; padding: 5px 0; background: #f2f2f2; }
.panel-head { height: 127px; border-top: 2px solid #b8b8b8; }
.panel-list { flex: 1; background: #fff; border-bottom: 2px solid #b8b8b8; }
.canvas { flex: 1; margin-left: 8px; border: 2px solid #b8b8b8; border-top: 0; background: #fff; overflow: hidden; }
.map { width: 2343px; height: 1323px; }
.districts path { stroke: rgba(50,50,50,.75); stroke-width: 1.3px; vector-effect: non-scaling-stroke; stroke-linejoin: round; }
.map-labels { font: 24.500px "Noto Sans", sans-serif; fill: #fff; }

.statusbar {
  height: 52px; background: #efefef; padding: 2px 0 0 9px;
  display: grid; align-items: center; white-space: nowrap;
  grid-template-columns: 1273px 100px 400px 53px 53px 160px 50px 86px 139px 85px 135px 34px 90px 37px 192px 50px;
}
.crs { letter-spacing: .2px; }
.field { height: 33px; border: 2px solid #b8b8b8; border-radius: 3px; background: #fff; display: flex; align-items: center; padding-left: 6px; }
.coord { width: 392px; justify-content: center; }
.scale { width: 149px; } .mag { width: 123px; } .rot { width: 124px; }
.check { width: 24px; height: 24px; border: 1.500px solid #bbb; background: #f8f8f8; display: grid; place-items: center; }

/* taskbar */
.taskbar { height: 77px; background: #1f160e; display: flex; }
.sys { width: 91.500px; display: grid; place-items: center; }
.apps { display: flex; margin-left: 6px; }
.app { width: 95.400px; display: flex; align-items: center; justify-content: center; position: relative; }
.app.on::after { content: ""; position: absolute; left: 8px; right: 8px; bottom: 0; height: 5px; background: #74b6ec; }
.app.active { background: #4b4540; width: 93px; }
.app.active::after { left: 0; right: 0; }
.adobe { width: 44px; height: 42px; border: 3px solid; font: 600 22px/34px "Open Sans", sans-serif; text-align: center; }
.id { color: #e4409b; background: #2d0517; } .ps { color: #79b9f3; background: #0a0549; } .ai { color: #f9a336; background: #2a1704; }
.tray {
  flex: 1; margin-left: 444px; border-right: 1px solid #777; margin-right: 7px; color: #fff;
  display: grid; align-items: center; font: 22px/35px "Open Sans", sans-serif;
  grid-template-columns: 72px 44px 45px 51px 40px 53px 62px 158px 60px;
}
.clock { width: 128px; text-align: center; padding-top: 2px; }
.tray svg:last-child { margin-top: 12px; }

/* properties dialog */
.dialog {
  position: absolute; left: 102px; top: 20px; width: 1277px; height: 1476px;
  border: 2px solid #1a82d2; background: #efefef;
  box-shadow: 0 6px 26px rgba(0,0,0,.42);
  display: flex; flex-direction: column;
}
.dlg-title { height: 56px; background: #fff; display: flex; align-items: center; padding-left: 15px; }
.dlg-title .name { margin-left: 10px; font: 21.300px "Noto Sans", sans-serif; white-space: nowrap; }
.dlg-title .help { margin-left: auto; font: 22px "Open Sans", sans-serif; }
.dlg-title > svg:last-child { margin: 0 35px 0 73px; }
.dlg-main { flex: 1; display: flex; min-height: 0; }
.tabs { width: 230px; background: #5c5c5c; color: #fff; }
.tabs li { height: 52.300px; display: flex; align-items: center; padding: 2px 0 0 7px; font-size: 19px; }
.tabs svg { width: 38px; height: 36px; margin-right: 11px; }
.tabs .sel { background: #efefef; color: #000; padding-left: 12px; }
.tabs .sel svg { height: 24px; }
.content { flex: 1; position: relative; padding: 6px 18px 0 24px; display: flex; flex-direction: column; }
.row { display: flex; align-items: center; flex: none; }

.combo, .btn, .end { background: linear-gradient(#fefefe, #ececec 50%, #dadada); }
.combo { flex: 1; height: 34px; border: 2px solid #b5b5b5; border-radius: 4px; display: flex; align-items: center; padding-left: 5px; box-shadow: inset 1px 1px #fff; }
.end { align-self: stretch; margin-left: auto; width: 23px; border-left: 1.500px solid #b5b5b5; display: grid; place-items: center; flex: none; }
.updown {
  background:
    linear-gradient(#b5b5b5, #b5b5b5) 0 50% / 100% 1.500px no-repeat,
    linear-gradient(#fdfdfd, #e2e2e2);
  position: relative;
}
.updown::before, .updown::after { content: ""; position: absolute; left: 5px; border: 6px solid transparent; border-top-width: 0; border-bottom: 7px solid #000; top: 3px; }
.updown::after { top: auto; bottom: 3px; border-bottom-width: 0; border-bottom-color: transparent; border-top: 7px solid #000; }
.btn { border: 1.500px solid #999; border-radius: 4px; padding: 0; font: inherit; color: #000; display: flex; align-items: center; justify-content: center; flex: none; background: linear-gradient(#fff, #f2f2f2 60%, #e6e6e6); }
.r1 { height: 41px; gap: 12px; }
.combo.wide { height: 40px; }
.combo.wide span { letter-spacing: .1px; }
.tag { margin-right: 7px; }
.btn.sq { width: 57px; height: 41px; border-color: #b5b5b5; }
.r2 { height: 43px; margin-top: 11px; }
.lbl-with { width: 98px; white-space: nowrap; }
.combo.white { background: #fff; height: 43px; }
.abc { font: bold 17px "DejaVu Sans Condensed", "DejaVu Sans"; margin-right: 4px; }
.btn.eps { width: 44px; height: 43px; margin-left: 11px; font: 36px/34px "DejaVu Serif"; color: #5f3a70; border-width: 2px; padding-bottom: 3px; }
.group { height: 44px; padding: 6px 0 0 3px; gap: 12px; color: #333; }
.group b { font-size: 20px; white-space: nowrap; }
.group hr { flex: 1; border: 0; height: 2px; background: #8e8e8e; margin: 0 0 4px; }
.sample { height: 143px; flex: none; border: 2px solid #b5b5b5; background: #fff; display: flex; justify-content: flex-end; }
.vscroll { width: 25px; padding-right: 1px; display: flex; flex-direction: column; }
.sb, .thumb { border: 1.500px solid #888; border-radius: 3px; background: #f6f6f6; display: grid; place-items: center; flex: none; }
.sb::before { content: ""; border: 6px solid transparent; }
.sb.u::before { border-top: 0; border-bottom: 7px solid #000; }
.sb.d::before { border-bottom: 0; border-top: 7px solid #000; }
.sb.l::before { border-left: 0; border-right: 7px solid #000; }
.sb.r::before { border-right: 0; border-left: 7px solid #000; }
.vscroll .sb { height: 24.500px; }
.vscroll .thumb { height: 39px; }
.trough { flex: 1; background: repeating-conic-gradient(#e2e2e2 0 25%, #fff 0 50%) 0 0 / 4px 4px; }
.r5 { height: 32px; margin-top: 3px; }
.input { width: 485px; height: 32px; background: #fff; border: 2px solid #b5b5b5; padding: 3px 4px; }
.btn.undo { width: 36px; height: 32px; }
.slider { position: relative; height: 32px; }
.slider::before { content: ""; position: absolute; left: 0; right: 0; top: 12px; height: 6px; border: 1.500px solid #999; border-radius: 2px; background: #fafafa; }
.handle { position: absolute; top: 3px; }
.s1 { width: 307px; margin-left: 10px; } .s1 .handle { left: 15px; }
.color { height: 32px; display: flex; }
.color i { border: 1.500px solid #888; border-radius: 4px; background: #fff; box-shadow: inset 0 0 3px 3px #efefef; }
.color b { width: 22px; border: 1.500px solid #888; border-radius: 4px; background: linear-gradient(#fff, #e8e8e8); padding: 10px 0 0 3px; }
.c1 { margin-left: auto; } .c1 i { width: 130px; }
.c2 i { width: 161px; }
.dots-h { display: block; flex: none; width: 328px; height: 6px; margin: 3px 0 1px 333px; background: repeating-linear-gradient(90deg, #c6c6c6 0 3px, #fff 3px 5px, #efefef 5px 7.500px); }
.split { height: 1026px; flex: none; display: flex; }
.list { width: 172px; margin-left: 4px; border: 2px solid #b5b5b5; background: #fff; border-radius: 3px; display: flex; flex-direction: column; justify-content: space-between; }
.list li { height: 30.800px; display: flex; align-items: center; padding: 1px 0 0 7px; white-space: nowrap; font-size: 19px; }
.list li svg { width: 28px; height: 26px; margin-right: 10px; }
.list .sel { background: #efefef; height: 32px; }
.hscroll { display: flex; height: 24px; padding: 0 3px 0 1px; }
.hscroll .sb { width: 24px; }
.hscroll .thumb { width: 85px; background: #f2f2f2; }
.hscroll .thumb::after { content: ""; width: 30px; height: 16px; background: radial-gradient(circle at 2px 2px, #b5b5b5 1.200px, transparent 1.600px) 0 0 / 6px 6px; }
.form { margin: 6px 0 0 18px; width: 800px; }
.frow { height: 49.200px; display: grid; grid-template-columns: 129px 613px 36px; column-gap: 0; align-items: center; white-space: nowrap; }
.frow > .dd { margin-left: 15px; }
.frow.head { height: 32px; }
.frow.font { height: 50px; }
.frow.style { height: 50px; margin: 8px 0 -1px; }
.frow label { padding-top: 1px; }
.dd { width: 36px; height: 34px; }
.biu { display: flex; align-items: center; }
.biu .btn { width: 36px; height: 36px; }
.biu .dd { margin: 0 15px 0 15px; }
.biu em { flex: 1; }
.btn.off { color: #888; }
.spin { flex: 1; height: 33px; border: 2px solid #b5b5b5; border-radius: 3px; background: #fff; display: flex; align-items: center; padding-left: 5px; }
.cell { display: flex; align-items: center; }
.s2 { width: 481px; margin-right: 9px; } .s2 .handle { left: 0; }
.sub { width: 55px; } .sub.word { width: 54px; }
.subst { display: flex; }
.box { width: 25px; height: 25px; border: 1.500px solid #aaa; border-radius: 3px; background: #f6f6f6; margin-right: 9px; }
.subst span { width: 235px; font-size: 19.200px; }
.btn.more { width: 46px; height: 38px; margin: 0 0 0 483px; color: #666; }
.buttons { display: flex; align-items: center; height: 43px; margin: 10px -13px 0 -15px; gap: 15px; }
.btn.push { width: 143px; height: 43px; border: 2px solid #b5b5b5; background: linear-gradient(#fdfdfd, #eee 50%, #dedede); }
.push.ok { margin-left: 254px; }
.btn.push.default { border: 2px solid #737373; background: linear-gradient(#7db3f0 3px, #eaf0f7 4px, #d5dde8 35px, #5f9fe8 36px); }
.menu span { margin: 0 38px 0 14px; }
.menu svg { margin-right: -14px; }
.dots-v { position: absolute; width: 5px; background: repeating-linear-gradient(#c6c6c6 0 3px, #fff 3px 5px, #efefef 5px 7.700px); }
.dots-v.a { left: 3px; top: 473px; height: 470px; }
.dots-v.b { left: 203px; top: 674px; height: 334px; }
```
